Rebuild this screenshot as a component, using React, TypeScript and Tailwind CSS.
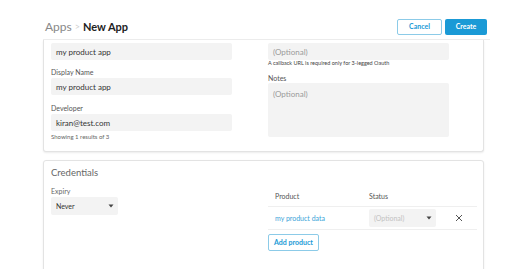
const Caret = () => (
    <svg width="6" height="4" viewBox="0 0 6 4" className="shrink-0"><path d="M0.5 0.5h5L3 3.5z" fill="#444" /></svg>
);

const Field = ({ label, value, placeholder }: { label?: string; value?: string; placeholder?: string }) => (
    <div className="flex flex-col">
        {label && <label className="text-[7px] leading-[12px] text-[#555]">{label}</label>}
        <div className="h-[17px] bg-[#f3f3f3] rounded-[2px] flex items-center pl-[5px] text-[8px]">
            {value ? <span className="text-[#333]">{value}</span> : <span className="text-[#9a9a9a]">{placeholder}</span>}
        </div>
    </div>
);

export default function App() {
    return (
        <div className="w-[512px] h-[269px] overflow-hidden bg-white font-['Lato',sans-serif]">
            {/* Header */}
            <div className="ml-[43px] w-[447px] h-[40px] pt-[14px] pl-[2px] pr-[3px] flex items-center justify-between border-b border-[#ececec]">
                <div className="flex items-center text-[12px] leading-none">
                    <span className="text-[#888]">Apps</span>
                    <span className="text-[#cfcfcf] mx-[3px] text-[9px]">&gt;</span>
                    <span className="font-bold text-[11px] text-[#222]">New App</span>
                </div>
                <div className="flex items-center gap-[3px]">
                    <button className="w-[45px] h-[16px] border border-[#8ccbe8] rounded-[2px] text-[#1a9ad6] text-[7px] font-bold bg-white">Cancel</button>
                    <button className="w-[42px] h-[16px] rounded-[2px] bg-[#1a9ad6] text-white text-[7px] font-bold">Create</button>
                </div>
            </div>

            {/* Scrolled body */}
            <div className="h-[229px] overflow-hidden pl-[43px]">
                <div className="w-[441px] bg-white border-x border-b border-[#e3e3e3] rounded-b-[3px] shadow-[0_1px_2px_rgba(0,0,0,0.08)] pt-[3px] pb-[10px] pl-[7px] flex gap-[36px]">
                    <div className="w-[181px] flex flex-col">
                        <Field value="my product app" />
                        <div className="mt-[6px]"><Field label="Display Name" value="my product app" /></div>
                        <div className="mt-[7px]"><Field label="Developer" value="kiran@test.com" /></div>
                        <span className="text-[6px] leading-[9px] text-[#666] mt-[1px]">Showing 1 results of 3</span>
                    </div>
                    <div className="w-[181px] flex flex-col">
                        <Field placeholder="(Optional)" />
                        <span className="text-[5.5px] leading-[7px] text-[#444] whitespace-nowrap">A callback URL is required only for 3-legged Oauth</span>
                        <label className="text-[7px] leading-[10px] text-[#555] mt-[6px]">Notes</label>
                        <div className="h-[54px] bg-[#f3f3f3] rounded-[2px] pl-[5px] pt-[5px] text-[8px] text-[#9a9a9a]">(Optional)</div>
                    </div>
                </div>

                <div className="w-[441px] mt-[8px] bg-white border border-[#e3e3e3] rounded-[3px] shadow-[0_1px_2px_rgba(0,0,0,0.08)] pt-[6px] pl-[7px] pb-[30px]">
                    <h3 className="text-[9.5px] leading-[12px] text-[#666]">Credentials</h3>
                    <div className="flex gap-[36px] mt-[7px]">
                        <div className="w-[181px] flex flex-col">
                            <label className="text-[7px] leading-[10px] text-[#666]">Expiry</label>
                            <div className="w-[67px] h-[18px] mt-[1px] bg-[#f3f3f3] rounded-[2px] flex items-center justify-between pl-[5px] pr-[4px] text-[7px] text-[#333]">
                                <span>Never</span>
                                <Caret />
                            </div>
                        </div>
                        <div className="w-[209px] flex flex-col">
                            <div className="h-[21px] flex items-center border-b border-[#efefef] text-[7px] text-[#555]">
                                <span className="w-[101px] pl-[7px]">Product</span>
                                <span>Status</span>
                            </div>
                            <div className="h-[23px] flex items-center border-b border-[#efefef]">
                                <span className="w-[101px] pl-[7px] text-[7px] text-[#3aa3d8]">my product data</span>
                                <div className="w-[67px] h-[18px] bg-[#f3f3f3] rounded-[2px] flex items-center justify-between pl-[5px] pr-[4px] text-[7px] text-[#c2c2c2]">
                                    <span>(Optional)</span>
                                    <Caret />
                                </div>
                                <div className="flex-1 flex justify-center pl-[5px]">
                                    <svg width="8" height="8" viewBox="0 0 8 8"><path d="M1 1L7 7M7 1L1 7" stroke="#555" strokeWidth="1" /></svg>
                                </div>
                            </div>
                            <button className="mt-[4px] w-[51px] h-[17px] border border-[#8ccbe8] rounded-[2px] bg-white text-[#1a9ad6] text-[7px] font-bold">Add product</button>
                        </div>
                    </div>
                </div>
            </div>
        </div>
    );
}
